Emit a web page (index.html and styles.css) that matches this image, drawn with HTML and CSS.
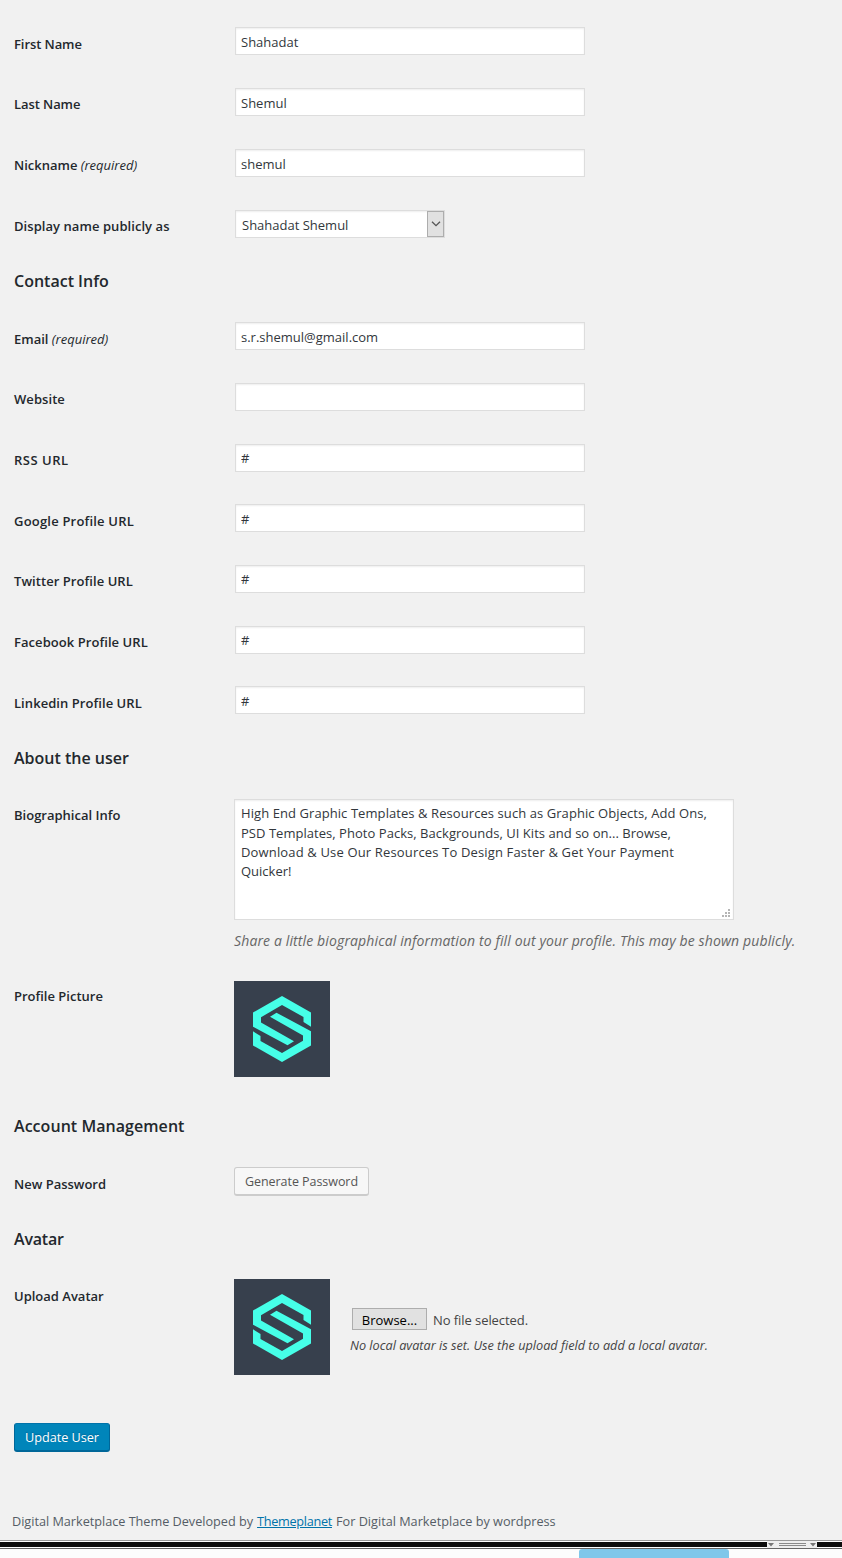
FILE: index.html
```
<!DOCTYPE html>
<html lang="en">
<head>
<meta charset="utf-8">
<title>Edit User</title>
<link rel="stylesheet" href="styles.css">
</head>
<body>
<svg width="0" height="0" class="defs" aria-hidden="true">
  <symbol id="logo" viewBox="0 0 96 96">
    <rect width="96" height="96" fill="#37404d"/>
    <g fill="#46ffe8">
      <path id="half" d="M48 15 77 31.5V45.7L69.5 41V36L48 24 27 36.2V41.5L60 60.3 53.5 64.3 19 45.7V31.5Z"/>
      <use href="#half" transform="rotate(180 48 48)"/>
    </g>
  </symbol>
</svg>
<form class="profile">
  <section class="names">
    <div class="row"><label class="tight">First Name</label><input class="field" type="text" value="Shahadat"></div>
    <div class="row"><label class="tight">Last Name</label><input class="field low" type="text" value="Shemul"></div>
    <div class="row"><label>Nickname <em>(required)</em></label><input class="field low" type="text" value="shemul"></div>
    <div class="row"><label class="wide">Display name publicly as</label>
      <div class="select"><span>Shahadat Shemul</span><i class="arrow"><svg width="10" height="6" viewBox="0 0 10 6"><path d="M1 .8 5 4.7 9 .8" fill="none" stroke="#555" stroke-width="1.3"/></svg></i></div>
    </div>
  </section>

  <h2>Contact Info</h2>
  <section>
    <div class="row"><label>Email <em>(required)</em></label><input class="field" type="text" value="s.r.shemul@gmail.com"></div>
    <div class="row"><label class="wide">Website</label><input class="field" type="text"></div>
    <div class="row"><label class="rss">RSS URL</label><input class="field" type="text" value="#"></div>
    <div class="row"><label class="google">Google Profile URL</label><input class="field" type="text" value="#"></div>
    <div class="row"><label class="wide">Twitter Profile URL</label><input class="field" type="text" value="#"></div>
    <div class="row"><label class="wide">Facebook Profile URL</label><input class="field" type="text" value="#"></div>
    <div class="row"><label class="wide">Linkedin Profile URL</label><input class="field" type="text" value="#"></div>
  </section>

  <h2>About the user</h2>
  <section>
    <div class="row bio"><label>Biographical Info</label>
      <div>
        <div class="textarea">
          <p class="l1">High End Graphic Templates &amp; Resources such as Graphic Objects, Add Ons,</p>
          <p class="l2">PSD Templates, Photo Packs, Backgrounds, UI Kits and so on... Browse,</p>
          <p class="l3">Download &amp; Use Our Resources To Design Faster &amp; Get Your Payment</p>
          <p>Quicker!</p>
          <svg class="grip" width="8" height="8" viewBox="0 0 8 8" fill="#b5b5b5"><path d="M6 0h2v2H6zM3 3h2v2H3zM6 3h2v2H6zM0 6h2v2H0zM3 6h2v2H3zM6 6h2v2H6z"/></svg>
        </div>
        <p class="description">Share a little biographical information to fill out your profile. This may be shown publicly.</p>
      </div>
    </div>
    <div class="row picture"><label>Profile Picture</label><svg class="avatar"><use href="#logo"/></svg></div>
  </section>

  <h2 class="account">Account Management</h2>
  <section>
    <div class="row password"><label>New Password</label><button type="button" class="button">Generate Password</button></div>
  </section>

  <h2 class="short">Avatar</h2>
  <section>
    <div class="row upload"><label>Upload Avatar</label>
      <div class="uploader">
        <svg class="avatar"><use href="#logo"/></svg>
        <div class="file">
          <div class="picker"><button type="button" class="browse">Browse...</button><span>No file selected.</span></div>
          <p>No local avatar is set. Use the upload field to add a local avatar.</p>
        </div>
      </div>
    </div>
  </section>
  <button type="button" class="button primary">Update User</button>
</form>
<footer><span class="dev">Digital Marketplace Theme Developed by</span><a>Themeplanet</a><span>For Digital Marketplace by wordpress</span></footer>
<div class="splitter">
  <div class="handle"><svg width="50" height="5" viewBox="0 0 50 5"><path d="M1 1h6L4 4.5zM43 1h6L46 4.5z" fill="#777"/><path d="M12 1h27v1H12zM12 3h27v1H12z" fill="#8a8a8a"/></svg></div>
</div>
<div class="below"><div class="tab"></div></div>
</body>
</html>
```
FILE: styles.css
```
* { box-sizing: border-box; }
body {
  margin: 0;
  height: 1558px;
  overflow: hidden;
  display: flex;
  flex-direction: column;
  background: #f1f1f1;
  color: #444;
  font: 13px/20px "Open Sans", "Noto Sans", sans-serif;
}
p { margin: 0; }
.defs { position: absolute; }

.profile { padding: 27.3px 0 0 14px; height: 1500px; }
.row { display: grid; grid-template-columns: 220px 1fr; align-items: start; height: 60.67px; }
label { padding-top: 6.5px; font-weight: 600; color: #23282d; }
label em { font-weight: 500; }
.tight { letter-spacing: -0.08px; }
.wide { letter-spacing: 0.06px; }
.google { letter-spacing: 0.2px; }
.rss { letter-spacing: 0.5px; }
h2 {
  margin: 0;
  height: 52.3px;
  font-size: 16px;
  line-height: 22px;
  font-weight: 600;
  color: #23282d;
}
h2.account { letter-spacing: 0.05px; }
h2.short { height: 51px; letter-spacing: -0.2px; }

.field, .select {
  width: 350px;
  height: 28px;
  margin: 0 0 0 1px;
  padding: 1px 5px 0;
  border: 1px solid #ddd;
  background: #fff;
  box-shadow: inset 0 1px 2px rgba(0, 0, 0, .07);
  color: #32373c;
  font: inherit;
}
.field.low { padding-top: 2px; }
.select {
  width: 210px;
  margin-top: 1px;
  padding: 0 0 0 6px;
  display: flex;
  justify-content: space-between;
  line-height: 28px;
}
.arrow {
  width: 17px;
  height: 26px;
  display: grid;
  place-items: center;
  border: 1px solid #adadad;
  background: #e1e1e1;
}

.bio { height: 182px; }
.bio label { padding-top: 5.5px; }
.textarea {
  position: relative;
  width: 500px;
  height: 121px;
  padding: 4px 6px;
  border: 1px solid #ddd;
  background: #fff;
  box-shadow: inset 0 1px 2px rgba(0, 0, 0, .07);
  color: #32373c;
  line-height: 19.4px;
  white-space: nowrap;
}
.l1 { letter-spacing: 0.075px; }
.l2 { letter-spacing: 0.036px; }
.l3 { letter-spacing: 0.153px; }
.grip { position: absolute; right: 3px; bottom: 2px; }
.description {
  margin-top: 11px;
  font-size: 14px;
  font-style: italic;
  letter-spacing: 0.13px;
  color: #666;
  white-space: nowrap;
}
.avatar { display: block; width: 96px; height: 96px; }
.picture { height: 134px; }
.picture label { padding-top: 5px; }

.password { height: 61px; }
.button {
  width: 135px;
  height: 29px;
  padding: 1px 0 0;
  justify-self: start;
  border: 1px solid #ccc;
  border-bottom-width: 2px;
  border-radius: 3px;
  background: #f7f7f7;
  color: #555;
  font: 12.5px/26px "Open Sans", sans-serif;
  letter-spacing: -0.05px;
}
.primary {
  width: 96px;
  padding: 0 0 1px;
  border-color: #0073aa #006799 #006799;
  background: #0085ba;
  color: #fff;
  font-size: 12.7px;
  text-shadow: 0 -1px 1px #006799;
}

.upload { height: 144px; }
.uploader { display: flex; gap: 20px; }
.file { padding-top: 29px; }
.picker { display: flex; gap: 6px; height: 22px; padding-left: 2px; line-height: 24px; }
.browse {
  width: 75px;
  height: 22px;
  padding: 1px 0 0;
  border: 1px solid #adadad;
  background: #e1e1e1;
  color: #000;
  font: inherit;
  line-height: 20px;
}
.picker span { letter-spacing: -0.07px; }
.file p { margin-top: 5px; font-size: 12.7px; font-style: italic; white-space: nowrap; }

footer {
  height: 40px;
  padding: 11px 0 0 12px;
  display: flex;
  gap: 4px;
  font-size: 12.7px;
  color: #555d66;
}
footer .dev { letter-spacing: -0.02px; }
footer a { color: #0073aa; text-decoration: underline; letter-spacing: -0.3px; }

.splitter {
  height: 9px;
  padding-left: 767px;
  border-top: 1px solid #999;
  border-bottom: 1px solid #666;
  background: linear-gradient(#fff 1px, #0d0d0d 1px, #0d0d0d 6px, #fff 6px);
}
.handle { width: 50px; height: 7px; padding-top: 1px; background: #eee; }
.handle svg { display: block; }
.below { height: 9px; padding-left: 579px; background: #fcfcfc; }
.tab { width: 150px; height: 9px; border-radius: 3px 3px 0 0; background: #7fc7ea; }
```
